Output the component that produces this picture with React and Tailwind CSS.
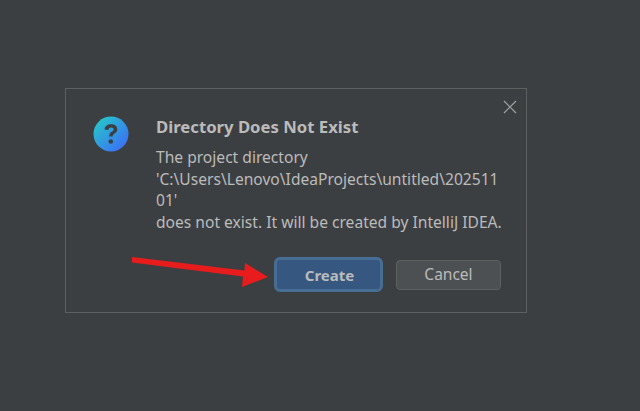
import React from 'react';

const QuestionIcon = () => (
  <svg width="36" height="36" viewBox="0 0 36 36">
    <defs>
      <linearGradient id="q" x1="0" y1="0" x2="1" y2="1">
        <stop offset="0.1" stopColor="#27c6c9" />
        <stop offset="0.85" stopColor="#3a73f5" />
      </linearGradient>
    </defs>
    <circle cx="18" cy="18" r="17.5" fill="url(#q)" />
    <path d="M11.500 13.500c.3-3.300 2.900-5.300 6.500-5.300 3.700 0 6.300 1.900 6.300 5 0 2.200-1.200 3.300-2.800 4.400-1.300.9-1.800 1.500-1.800 3h-3.500c0-2.700 1-3.900 2.700-5 1.100-.8 1.700-1.300 1.700-2.200 0-1.100-1-1.800-2.400-1.800-1.500 0-2.500.8-2.700 2.300z" fill="#3c3f41" />
    <circle cx="17.800" cy="25.500" r="2.300" fill="#3c3f41" />
  </svg>
);

const Arrow = () => (
  <svg className="absolute left-[130px] top-[254px]" width="140" height="36" viewBox="0 0 140 36">
    <path d="M2 3 L2 8.500 L113 22.500 L112 33 L138 23 L115 9 L114.500 16.500 Z" fill="#e81c1c" />
  </svg>
);

export default function App() {
  return (
    <div className="relative h-[411px] w-[640px] overflow-hidden bg-[#3c3f41] pt-[88px] pl-[65px] font-['Noto_Sans','Open_Sans',sans-serif] text-[#bbbbbb]">
      <div className="relative h-[225px] w-[462px] border border-[#5e6060]">
        <button className="absolute right-[9px] top-[11px] text-[#a0a2a3]">
          <svg width="14" height="14" viewBox="0 0 14 14" stroke="currentColor" strokeWidth="1.2" fill="none">
            <path d="M1 1 L13 13 M13 1 L1 13" />
          </svg>
        </button>
        <div className="flex pl-[27px] pt-[27px]">
          <QuestionIcon />
          <div className="ml-[27px] pt-[1px]">
            <div className="text-[16.700px] font-bold leading-5">Directory Does Not Exist</div>
            <div className="mt-[10px] w-[352px] text-[15.600px] leading-[21.500px]">
              <div>The project directory</div>
              <div>'C:\Users\Lenovo\IdeaProjects\untitled\202511</div>
              <div>01'</div>
              <div>does not exist. It will be created by IntelliJ IDEA.</div>
            </div>
          </div>
        </div>
        <div className="mt-[24px] flex items-center justify-end gap-[13px] pr-[25px]">
          <button className="h-[35px] w-[109px] rounded-[6px] border-[3px] border-[#466d94] bg-[#365880] pt-[1px] pl-[2px] text-[15px] font-bold text-[#bbbbbb]">Create</button>
          <button className="h-[30px] w-[105px] rounded-[4px] border border-[#5e6060] bg-[#4c5052] text-[15.500px] text-[#bbbbbb]">Cancel</button>
        </div>
      </div>
      <Arrow />
    </div>
  );
}
